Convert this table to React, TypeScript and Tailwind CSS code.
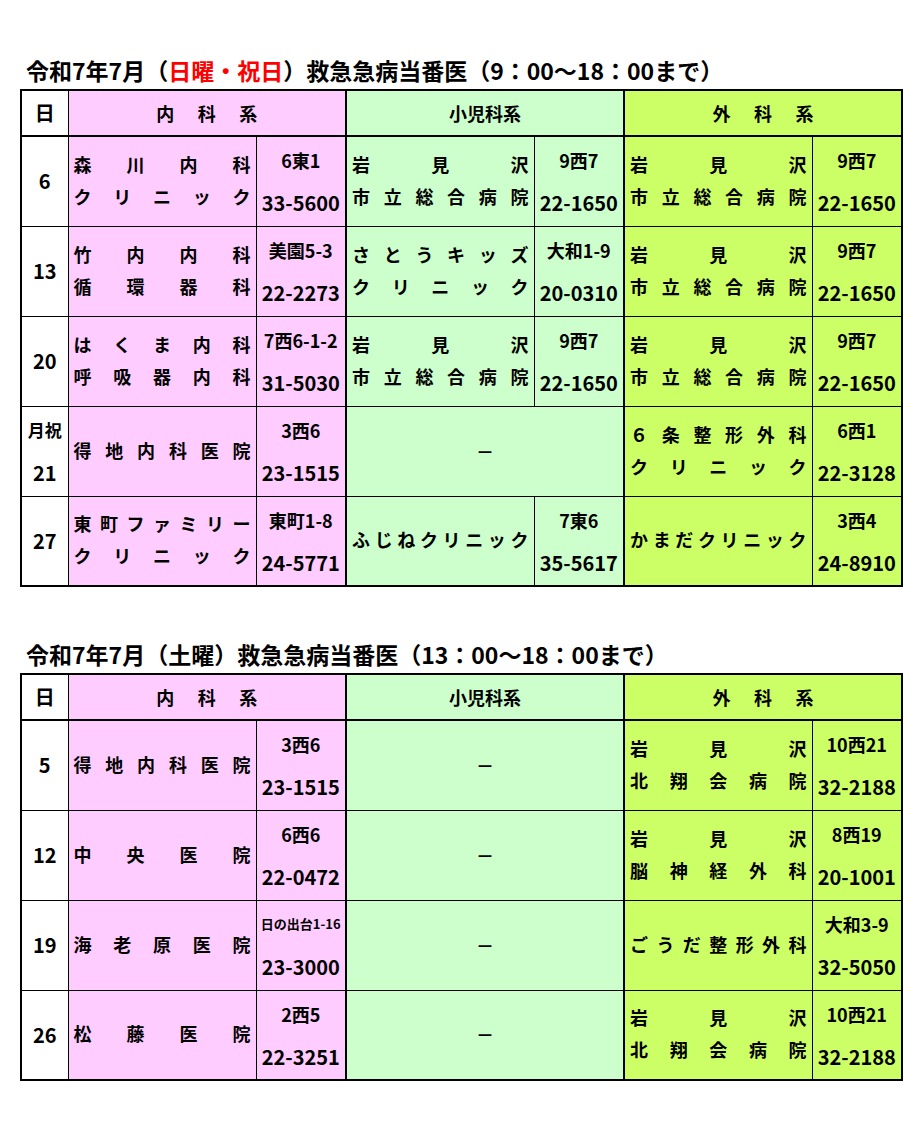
import React from "react";

type Clinic = { name: string[]; addr: string; tel: string; smallAddr?: boolean };

type Row = {
  day: string;
  sub?: string;
  naika: Clinic;
  shoni: Clinic | null;
  geka: Clinic;
};

const IWAMI_SHIRITSU: Clinic = { name: ["岩見沢", "市立総合病院"], addr: "9西7", tel: "22-1650" };
const IWAMI_HOKUSHO: Clinic = { name: ["岩見沢", "北翔会病院"], addr: "10西21", tel: "32-2188" };

const HOLIDAY_ROWS: Row[] = [
  {
    day: "6",
    naika: { name: ["森川内科", "クリニック"], addr: "6東1", tel: "33-5600" },
    shoni: IWAMI_SHIRITSU,
    geka: IWAMI_SHIRITSU,
  },
  {
    day: "13",
    naika: { name: ["竹内内科", "循環器科"], addr: "美園5-3", tel: "22-2273" },
    shoni: { name: ["さとうキッズ", "クリニック"], addr: "大和1-9", tel: "20-0310" },
    geka: IWAMI_SHIRITSU,
  },
  {
    day: "20",
    naika: { name: ["はくま内科", "呼吸器内科"], addr: "7西6-1-2", tel: "31-5030" },
    shoni: IWAMI_SHIRITSU,
    geka: IWAMI_SHIRITSU,
  },
  {
    day: "21",
    sub: "月祝",
    naika: { name: ["得地内科医院"], addr: "3西6", tel: "23-1515" },
    shoni: null,
    geka: { name: ["６条整形外科", "クリニック"], addr: "6西1", tel: "22-3128" },
  },
  {
    day: "27",
    naika: { name: ["東町ファミリー", "クリニック"], addr: "東町1-8", tel: "24-5771" },
    shoni: { name: ["ふじねクリニック"], addr: "7東6", tel: "35-5617" },
    geka: { name: ["かまだクリニック"], addr: "3西4", tel: "24-8910" },
  },
];

const SATURDAY_ROWS: Row[] = [
  {
    day: "5",
    naika: { name: ["得地内科医院"], addr: "3西6", tel: "23-1515" },
    shoni: null,
    geka: IWAMI_HOKUSHO,
  },
  {
    day: "12",
    naika: { name: ["中央医院"], addr: "6西6", tel: "22-0472" },
    shoni: null,
    geka: { name: ["岩見沢", "脳神経外科"], addr: "8西19", tel: "20-1001" },
  },
  {
    day: "19",
    naika: { name: ["海老原医院"], addr: "日の出台1-16", tel: "23-3000", smallAddr: true },
    shoni: null,
    geka: { name: ["ごうだ整形外科"], addr: "大和3-9", tel: "32-5050" },
  },
  {
    day: "26",
    naika: { name: ["松藤医院"], addr: "2西5", tel: "22-3251" },
    shoni: null,
    geka: IWAMI_HOKUSHO,
  },
];

// Excel "distributed" alignment: first char at left edge, last at right edge
function Spread({ text }: { text: string }) {
  return (
    <div className="flex justify-between leading-[32px]">
      {[...text].map((c, i) => (
        <span key={i}>{c}</span>
      ))}
    </div>
  );
}

function ClinicCells({ clinic, bg, last }: { clinic: Clinic; bg: string; last?: boolean }) {
  return (
    <>
      <td className={`${bg} border border-black px-[5px] pb-[3px] align-middle text-[18px]`}>
        {clinic.name.map((line) => (
          <Spread key={line} text={line} />
        ))}
      </td>
      <td className={`${bg} border border-black ${last ? "" : "border-r-2"} p-0 pt-[7px] align-top text-center`}>
        <div className={`leading-[32px] ${clinic.smallAddr ? "text-[13px]" : "text-[18px]"}`}>{clinic.addr}</div>
        <div className="mt-[11px] text-[20px] leading-[32px]">{clinic.tel}</div>
      </td>
    </>
  );
}

function Schedule({ rows }: { rows: Row[] }) {
  return (
    <table className="w-[881px] table-fixed border-collapse border-2 border-black font-bold text-black">
      <colgroup>
        <col className="w-[47px]" />
        <col className="w-[188px]" />
        <col className="w-[90px]" />
        <col className="w-[188px]" />
        <col className="w-[90px]" />
        <col className="w-[188px]" />
        <col className="w-[90px]" />
      </colgroup>
      <thead>
        <tr className="h-[46px]">
          <th className="border border-b-2 border-black bg-white text-[20px]">日</th>
          <th colSpan={2} className="border border-b-2 border-r-2 border-black bg-[#ffccff] text-[18px]">
            <div className="mx-auto flex w-[101px] justify-between">
              <span>内</span>
              <span>科</span>
              <span>系</span>
            </div>
          </th>
          <th colSpan={2} className="border border-b-2 border-r-2 border-black bg-[#ccffcc] text-[18px]">
            小児科系
          </th>
          <th colSpan={2} className="border border-b-2 border-black bg-[#ccff66] text-[18px]">
            <div className="mx-auto flex w-[101px] justify-between">
              <span>外</span>
              <span>科</span>
              <span>系</span>
            </div>
          </th>
        </tr>
      </thead>
      <tbody>
        {rows.map((r) => (
          <tr key={r.day} className="h-[90px]">
            {r.sub ? (
              <td className="border border-black bg-white p-0 pt-[7px] align-top text-center">
                <div className="text-[17px] leading-[32px]">{r.sub}</div>
                <div className="mt-[11px] text-[20px] leading-[32px]">{r.day}</div>
              </td>
            ) : (
              <td className="border border-black bg-white text-center text-[20px]">{r.day}</td>
            )}
            <ClinicCells clinic={r.naika} bg="bg-[#ffccff]" />
            {r.shoni ? (
              <ClinicCells clinic={r.shoni} bg="bg-[#ccffcc]" />
            ) : (
              <td colSpan={2} className="border border-r-2 border-black bg-[#ccffcc] text-center text-[18px]">
                －
              </td>
            )}
            <ClinicCells clinic={r.geka} bg="bg-[#ccff66]" last />
          </tr>
        ))}
      </tbody>
    </table>
  );
}

export default function App() {
  return (
    <div className="min-h-[1126px] bg-white pl-[20px] pt-[55px] font-['Noto_Sans_CJK_JP',sans-serif] text-black">
      <h1 className="mb-[3px] pl-[6px] text-[23px] font-bold leading-[31px]">
        令和7年7月（<span className="text-[#ff0000]">日曜・祝日</span>）救急急病当番医（9：00～18：00まで）
      </h1>
      <Schedule rows={HOLIDAY_ROWS} />

      <h1 className="mb-[3px] mt-[52px] pl-[6px] text-[23px] font-bold leading-[31px]">
        令和7年7月（土曜）救急急病当番医（13：00～18：00まで）
      </h1>
      <Schedule rows={SATURDAY_ROWS} />
    </div>
  );
}
